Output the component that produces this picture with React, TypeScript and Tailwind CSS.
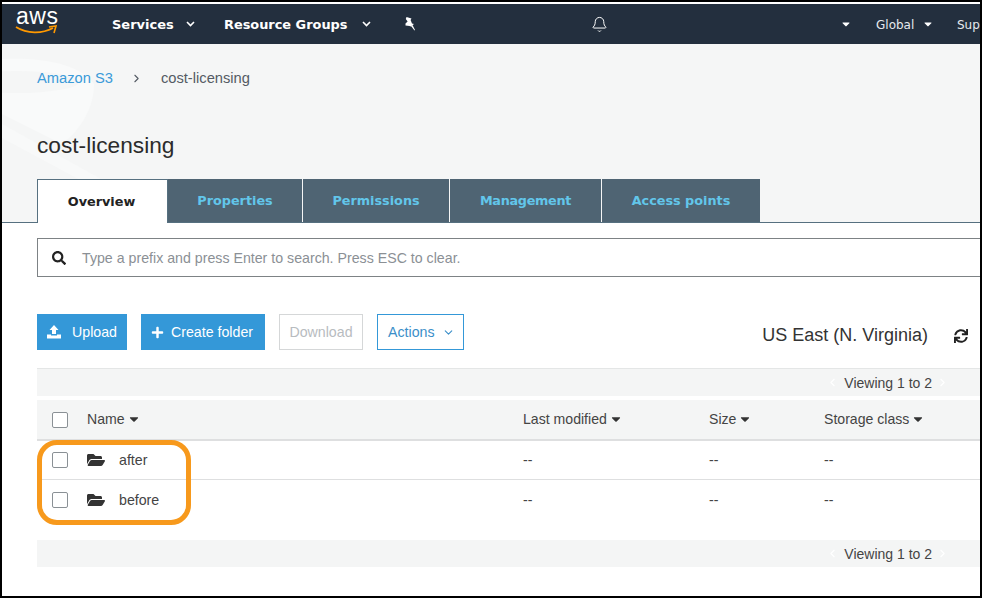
import React from "react";
import { FaCaretDown, FaFolderOpen, FaPlus, FaSearch, FaSync } from "react-icons/fa";
import { Bell, ChevronDown, ChevronLeft, ChevronRight } from "lucide-react";

const Check = () => <div className="w-4 h-4 shrink-0 rounded-[2px] border border-[#8a9095] bg-white" />;

const Chev = ({ className }: { className: string }) => (
  <svg width="9" height="6" viewBox="0 0 9 6" className={`shrink-0 ${className}`}><path d="M1 1L4.5 4.5L8 1" stroke="#fff" strokeWidth="1.6" fill="none" /></svg>
);

const Nav = () => (
  <div className="h-10 bg-[#232f3e] flex items-center text-white shrink-0 overflow-hidden font-['DejaVu_Sans',sans-serif] whitespace-nowrap">
    <div className="w-[110px] pl-[14px] shrink-0 flex flex-col">
      <span className="font-['Liberation_Sans',sans-serif] text-[23px] leading-[15px] -mt-[5px] tracking-[0.5px]">aws</span>
      <svg width="42" height="10" viewBox="0 0 42 10" className="mt-[1px] -ml-[1px]">
        <path d="M1 2C12 9 27 9 38 3" stroke="#f90" strokeWidth="1.8" fill="none" />
        <path d="M34 2L41 1L39 8" stroke="#f90" strokeWidth="1.6" fill="none" />
      </svg>
    </div>
    <span className="text-[13px] font-bold w-[62px] shrink-0 pt-[2px]">Services</span>
    <Chev className="ml-[12px]" />
    <span className="text-[12.9px] font-bold ml-[29px] w-[126px] shrink-0 pt-[2px]">Resource Groups</span>
    <Chev className="ml-[12px]" />
    <svg width="13" height="14" viewBox="0 0 13 14" fill="#fff" className="ml-[32px] shrink-0">
      <path d="M3.5 0L8.5 1.5L7.6 3L9 6.5L11 7L8 9.5L6.5 9L2.5 8.5L2.5 6.5L4.6 4.5L2.8 2Z" />
      <path d="M8 9L11.5 13.5L12 13L9.5 8Z" />
    </svg>
    <Bell size={17} strokeWidth={1.4} className="ml-[175px] shrink-0" />
    <FaCaretDown className="ml-[232px] text-[12px] shrink-0" />
    <span className="ml-[24px] text-[12px] text-[#e6eaee] w-[39px] shrink-0 pt-[2px]">Global</span>
    <FaCaretDown className="ml-[7px] text-[12px] shrink-0" />
    <span className="ml-[23px] text-[12px] text-[#e6eaee] w-[23px] overflow-hidden shrink-0 pt-[2px]">Sup</span>
  </div>
);

const tabs: [string, string, string][] = [
  ["Properties", "w-[134px]", ""],
  ["Permissions", "w-[146px]", ""],
  ["Management", "w-[151px]", "tracking-[-0.3px]"],
  ["Access points", "w-[158px]", ""],
];

const Head = () => (
  <div className="relative shrink-0 h-[179px] bg-[#f5f6f6] overflow-hidden">
    <svg className="absolute left-0 top-0" width="110" height="179" viewBox="0 0 110 179">
      <path d="M0 15C40 13 78 20 92 40C92 62 80 85 60 100L0 70Z" fill="#f9fafa" />
      <ellipse cx="15" cy="38" rx="62" ry="11" fill="#f5f6f6" />
      <path d="M0 80L108 140V152L0 94Z" fill="#f8f9f9" />
    </svg>
    <div className="relative pl-[35px] pt-[24px] flex items-center text-[14.7px] leading-5">
      <span className="text-[#3b9bd9]">Amazon S3</span>
      <ChevronRight size={13} className="ml-[17px] text-[#545b64] shrink-0" />
      <span className="ml-[18px] text-[#545b64]">cost-licensing</span>
    </div>
    <h1 className="relative ml-[35px] mt-[43px] text-[22.7px] leading-7 text-[#2b2b2b]">cost-licensing</h1>
    <div className="absolute left-0 right-0 bottom-0 h-[1px] bg-[#567080]" />
    <div className="absolute left-[35px] bottom-0 flex h-[44px] font-['DejaVu_Sans',sans-serif] text-[12.8px] font-bold">
      <div className="w-[131px] bg-white border border-b-0 border-[#567080] flex items-center justify-center pt-[1px] pr-[2px] text-[#222] mr-[-1px] z-10">Overview</div>
      {tabs.map(([t, w, x]) => (
        <div key={t} className={`${w} ${x} ml-[1px] bg-[#4f6473] flex items-center justify-center border-b border-[#567080] text-[#62c6ea]`}>{t}</div>
      ))}
    </div>
  </div>
);

const Bar = ({ className }: { className: string }) => (
  <div className={`ml-[35px] bg-[#f4f5f5] flex items-center justify-end ${className}`}>
    <ChevronLeft size={13} className="text-white shrink-0" />
    <span className="ml-[5px] text-[14px] text-[#444] pt-[2px]">Viewing 1 to 2</span>
    <ChevronRight size={13} className="ml-[4px] mr-[31px] text-white shrink-0" />
  </div>
);

const Row = ({ name, className }: { name: string; className: string }) => (
  <div className={`ml-[35px] flex items-center text-[14.2px] text-[#444] shrink-0 ${className}`}>
    <div className="pl-[15px] w-[50px]"><Check /></div>
    <div className="w-[32px] text-[#333] text-[18px]"><FaFolderOpen /></div>
    <div className="w-[404px] pt-[2px]">{name}</div>
    <div className="w-[186px] pt-[2px]">--</div>
    <div className="w-[115px] pt-[2px]">--</div>
    <div className="pt-[2px]">--</div>
  </div>
);

const Sort = ({ t, className }: { t: string; className: string }) => (
  <div className={`${className} flex items-center gap-[2px]`}><span>{t}</span><FaCaretDown className="text-[14px] text-[#333] shrink-0" /></div>
);

export default function App() {
  return (
    <div className="relative w-[982px] h-[598px] border-2 border-black bg-white overflow-hidden font-['Liberation_Sans',sans-serif] flex flex-col">
      <div className="h-[2px] shrink-0 bg-white" />
      <Nav />
      <Head />
      <div className="ml-[35px] mt-[15px] h-[39px] shrink-0 border border-r-0 border-[#7d8285] flex items-center text-[14.2px] text-[#8b9095]">
        <FaSearch className="ml-[14px] text-[14px] text-[#222] shrink-0" />
        <span className="ml-[16px] pt-[2px]">Type a prefix and press Enter to search. Press ESC to clear.</span>
      </div>
      <div className="ml-[35px] mt-[37px] h-9 shrink-0 flex items-center text-[14.2px]">
        <div className="w-[90px] h-9 bg-[#3498d8] text-white flex items-center pl-[9px]">
          <svg width="16" height="14" viewBox="0 0 16 14" fill="#fff" className="shrink-0">
            <path d="M8 0L12.5 5H10V9H6V5H3.5Z" />
            <path d="M1 9.5H5V10.5H11V9.5H15V13.5H1Z" />
          </svg>
          <span className="ml-[10px] pt-[2px]">Upload</span>
        </div>
        <div className="ml-[14px] w-[124px] h-9 bg-[#3498d8] text-white flex items-center pl-[10px]">
          <FaPlus className="text-[13px] shrink-0" />
          <span className="ml-[7px] pt-[2px]">Create folder</span>
        </div>
        <div className="ml-[14px] w-[84px] h-9 border border-[#d5d7d8] text-[#b8bcbf] flex items-center justify-center pt-[2px]">Download</div>
        <div className="ml-[14px] w-[87px] h-9 border border-[#3498d8] text-[#3b8fc9] flex items-center pl-[10px]">
          <span className="pt-[2px]">Actions</span>
          <ChevronDown size={13} className="ml-[7px] shrink-0" />
        </div>
        <div className="ml-auto text-lg text-[#333] pt-[6px]">US East (N. Virginia)</div>
        <div className="pt-[8px] ml-[26px] mr-[12px]"><FaSync className="text-[14px] text-[#222]" /></div>
      </div>
      <div className="h-[18px] shrink-0" />
      <Bar className="h-[28px] shrink-0 border-t border-[#e4e6e6]" />
      <div className="ml-[35px] mt-[4px] h-[41px] shrink-0 bg-[#f4f5f5] border-b-2 border-[#dedfe0] flex items-center text-[14.1px] text-[#444]">
        <div className="pl-[15px] w-[50px]"><Check /></div>
        <Sort t="Name" className="w-[436px]" />
        <Sort t="Last modified" className="w-[186px]" />
        <Sort t="Size" className="w-[115px]" />
        <Sort t="Storage class" className="" />
      </div>
      <Row name="after" className="h-[39px] border-b border-[#dedfe0]" />
      <Row name="before" className="h-10 pb-[1px]" />
      <div className="h-[20px] shrink-0" />
      <Bar className="h-[27px] shrink-0" />
      <div className="absolute left-[35px] top-[438px] w-[154px] h-[85px] border-[5px] border-[#f7991c] rounded-[20px]" />
    </div>
  );
}
